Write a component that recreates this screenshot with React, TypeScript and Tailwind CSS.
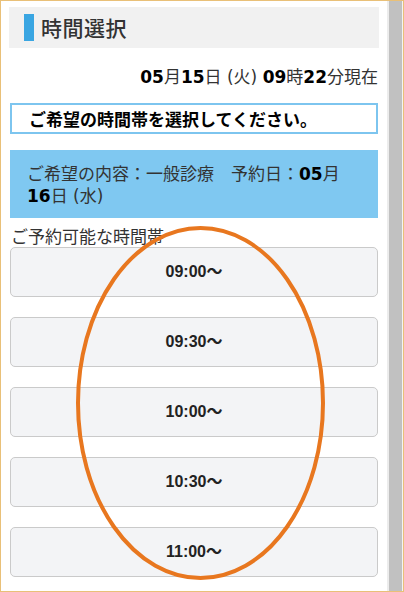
const slots = ["09:00〜", "09:30〜", "10:00〜", "10:30〜", "11:00〜"];

const jp = "font-['DejaVu_Sans','Noto_Sans_CJK_JP',sans-serif]";

export default function App() {
  return (
    <div className="relative w-[404px] h-[592px] bg-white">
      <div className="flex w-full h-full border border-[#e9c078] overflow-hidden">
        {/* main column */}
        <div className={`flex-1 flex flex-col px-2 pt-[6px] text-[#333] ${jp}`}>
          {/* heading */}
          <div className="flex items-center h-[41px] bg-[#f1f1f1] pl-[15px]">
            <span className="w-[10px] h-[27px] bg-[#3aa6e2]" />
            <h1 className="ml-[7px] text-[21px] leading-none font-medium font-['Noto_Sans_CJK_JP',sans-serif] tracking-[0.5px] text-[#333]">
              時間選択
            </h1>
          </div>

          {/* current time */}
          <p className="mt-[18px] text-right text-[17px] leading-[22px] pr-[1px]">
            <b className="text-black">05</b>月<b className="text-black">15</b>日 (火) <b className="text-black">09</b>時<b className="text-black">22</b>分現在
          </p>

          {/* instruction */}
          <div className="mx-[1px] mt-[15px] h-[31px] border-2 border-[#7dc5ef] flex items-center pl-[17px]">
            <span className="text-[17px] font-bold text-black font-['Noto_Sans_CJK_JP',sans-serif]">
              ご希望の時間帯を選択してください。
            </span>
          </div>

          {/* selection summary */}
          <div className="mx-[1px] mt-[16px] bg-[#7fc8f1] px-[17px] pt-[13px] pb-[11px] text-[17px] leading-[22px] text-[#333]">
            ご希望の内容：一般診療　予約日：<b className="text-black">05</b>月<br />
            <b className="text-black">16</b>日 (水)
          </div>

          <p className="mt-[9px] pl-[2px] text-[17px] leading-[20px] text-[#333]">ご予約可能な時間帯</p>

          {/* time slots */}
          <div className="mx-[1px] flex flex-col gap-5">
            {slots.map((s) => (
              <button
                key={s}
                className="h-[50px] rounded-[5px] border border-[#cacaca] bg-[#f3f4f6] text-[16px] font-bold text-[#222] font-['Liberation_Sans','Noto_Sans_CJK_JP',sans-serif]"
              >
                {s}
              </button>
            ))}
          </div>
        </div>

        {/* scrollbar */}
        <div className="w-[2px] bg-[#ececec]" />
        <div className="w-[13px] bg-[#c1c1c1]" />
        <div className="w-[1px] bg-[#f4f4f4]" />
      </div>

      {/* annotation ring */}
      <svg className="absolute inset-0 pointer-events-none" width="404" height="592" viewBox="0 0 404 592">
        <ellipse cx="200.5" cy="403" rx="122.5" ry="175" fill="none" stroke="#e8771f" strokeWidth="4" />
      </svg>
    </div>
  );
}
